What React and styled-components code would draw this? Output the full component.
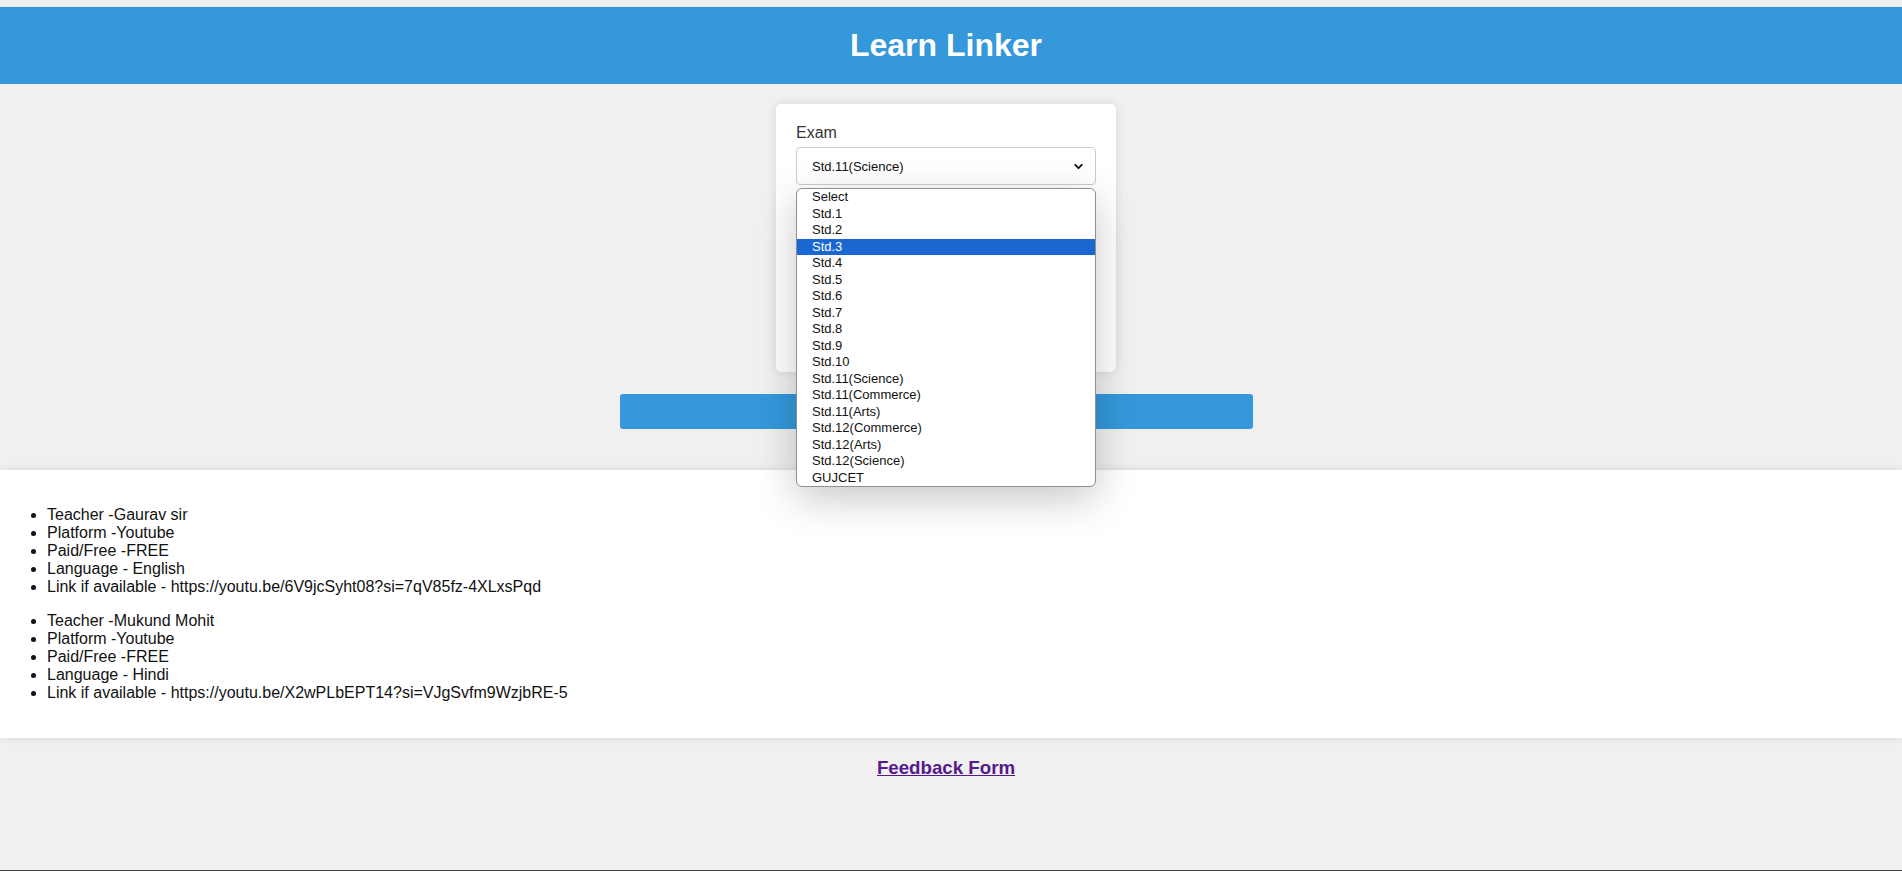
import React from "react";
import styled, { createGlobalStyle } from "styled-components";
import { ChevronDown } from "lucide-react";

const GlobalStyle = createGlobalStyle`
  html, body {
    margin: 0;
    padding: 0;
    background: #f0f0f0;
    font-family: "Liberation Sans", Arial, sans-serif;
    color: #222;
  }
  * {
    box-sizing: border-box;
  }
`;

const Page = styled.div`
  padding-top: 7px;
  min-height: 871px;
`;

const Header = styled.header`
  background-color: #3498db;
  padding: 20px 10px 20px 0;
  text-align: center;

  & h1 {
    margin: 0;
    font-size: 32px;
    line-height: 37px;
    font-weight: 700;
    color: white;
  }
`;

const Centered = styled.div`
  display: flex;
  justify-content: center;
  padding-right: ${(p) => p.$shift || 10}px;
`;

const Card = styled.form`
  width: 340px;
  margin-top: 20px;
  padding: 20px;
  background: white;
  border-radius: 5px;
  box-shadow: 0 0 10px rgba(0, 0, 0, 0.1);
`;

const Group = styled.div`
  position: relative;
  margin-bottom: 15px;

  & label {
    display: block;
    min-height: 18px;
    font-size: 16px;
    line-height: 18px;
    margin-bottom: 5px;
    color: #333;
  }
`;

const SelectBox = styled.div`
  display: flex;
  align-items: center;
  justify-content: space-between;
  height: 38px;
  padding: 0 10px 0 15px;
  border: 1px solid #ccc;
  border-radius: 4px;
  background: white;
  font-size: 13px;
  color: #111;
`;

const Popup = styled.ul`
  position: absolute;
  z-index: 10;
  top: calc(100% + 3px);
  left: 0;
  width: 100%;
  margin: 0;
  padding: 0;
  list-style: none;
  background: white;
  border: 1px solid #8f8f8f;
  border-radius: 6px;
  overflow: hidden;
  box-shadow: 0 12px 40px rgba(0, 0, 0, 0.22);
`;

const Option = styled.li`
  height: 16.5px;
  line-height: 16.5px;
  padding-left: 15px;
  font-size: 13px;
  color: ${(p) => (p.$active ? "white" : "#111")};
  background: ${(p) => (p.$active ? "#1a67d2" : "transparent")};
`;

const SearchButton = styled.button`
  width: 633px;
  height: 35px;
  margin-top: 22px;
  border: none;
  border-radius: 3px;
  background-color: #3498db;
  color: white;
  font-family: inherit;
  font-size: 16px;
`;

const Results = styled.section`
  margin-top: 41px;
  padding: 20px 0 20px 7px;
  background: white;
  box-shadow: 0 0 10px rgba(0, 0, 0, 0.1);

  & ul {
    margin: 16px 0;
    padding-left: 40px;
  }

  & li {
    font-size: 16px;
    line-height: 18px;
    color: #111;
  }
`;

const Footer = styled.h3`
  margin: 18.72px 0;
  padding-right: 10px;
  text-align: center;
  font-size: 18.72px;

  & a {
    color: #551a8b;
  }
`;

const BottomEdge = styled.div`
  position: fixed;
  left: 0;
  right: 0;
  bottom: 0;
  height: 1px;
  background: #3c3c3c;
`;

const options = [
  "Select",
  "Std.1",
  "Std.2",
  "Std.3",
  "Std.4",
  "Std.5",
  "Std.6",
  "Std.7",
  "Std.8",
  "Std.9",
  "Std.10",
  "Std.11(Science)",
  "Std.11(Commerce)",
  "Std.11(Arts)",
  "Std.12(Commerce)",
  "Std.12(Arts)",
  "Std.12(Science)",
  "GUJCET",
];

const results = [
  {
    teacher: "Gaurav sir",
    platform: "Youtube",
    paid: "FREE",
    language: "English",
    link: "https://youtu.be/6V9jcSyht08?si=7qV85fz-4XLxsPqd",
  },
  {
    teacher: "Mukund Mohit",
    platform: "Youtube",
    paid: "FREE",
    language: "Hindi",
    link: "https://youtu.be/X2wPLbEPT14?si=VJgSvfm9WzjbRE-5",
  },
];

const Select = ({ value }) => (
  <SelectBox>
    <span>{value}</span>
    <ChevronDown size={13} strokeWidth={3.5} color="#111" />
  </SelectBox>
);

// the open exam list covers the other two fields and the button label
const App = () => {
  return (
    <Page>
      <GlobalStyle />
      <Header>
        <h1>Learn Linker</h1>
      </Header>
      <Centered>
        <Card>
          <Group>
            <label>Exam</label>
            <Select value="Std.11(Science)" />
            <Popup>
              {options.map((o) => (
                <Option key={o} $active={o === "Std.3"}>
                  {o}
                </Option>
              ))}
            </Popup>
          </Group>
          <Group>
            <label />
            <Select />
          </Group>
          <Group>
            <label />
            <Select />
          </Group>
        </Card>
      </Centered>
      <Centered $shift={29}>
        <SearchButton type="button" aria-label="Search" />
      </Centered>
      <Results>
        {results.map((r) => (
          <ul key={r.link}>
            <li>Teacher -{r.teacher}</li>
            <li>Platform -{r.platform}</li>
            <li>Paid/Free -{r.paid}</li>
            <li>Language - {r.language}</li>
            <li>Link if available - {r.link}</li>
          </ul>
        ))}
      </Results>
      <Footer>
        <a href="#feedback">Feedback Form</a>
      </Footer>
      <BottomEdge />
    </Page>
  );
};

export default App;
